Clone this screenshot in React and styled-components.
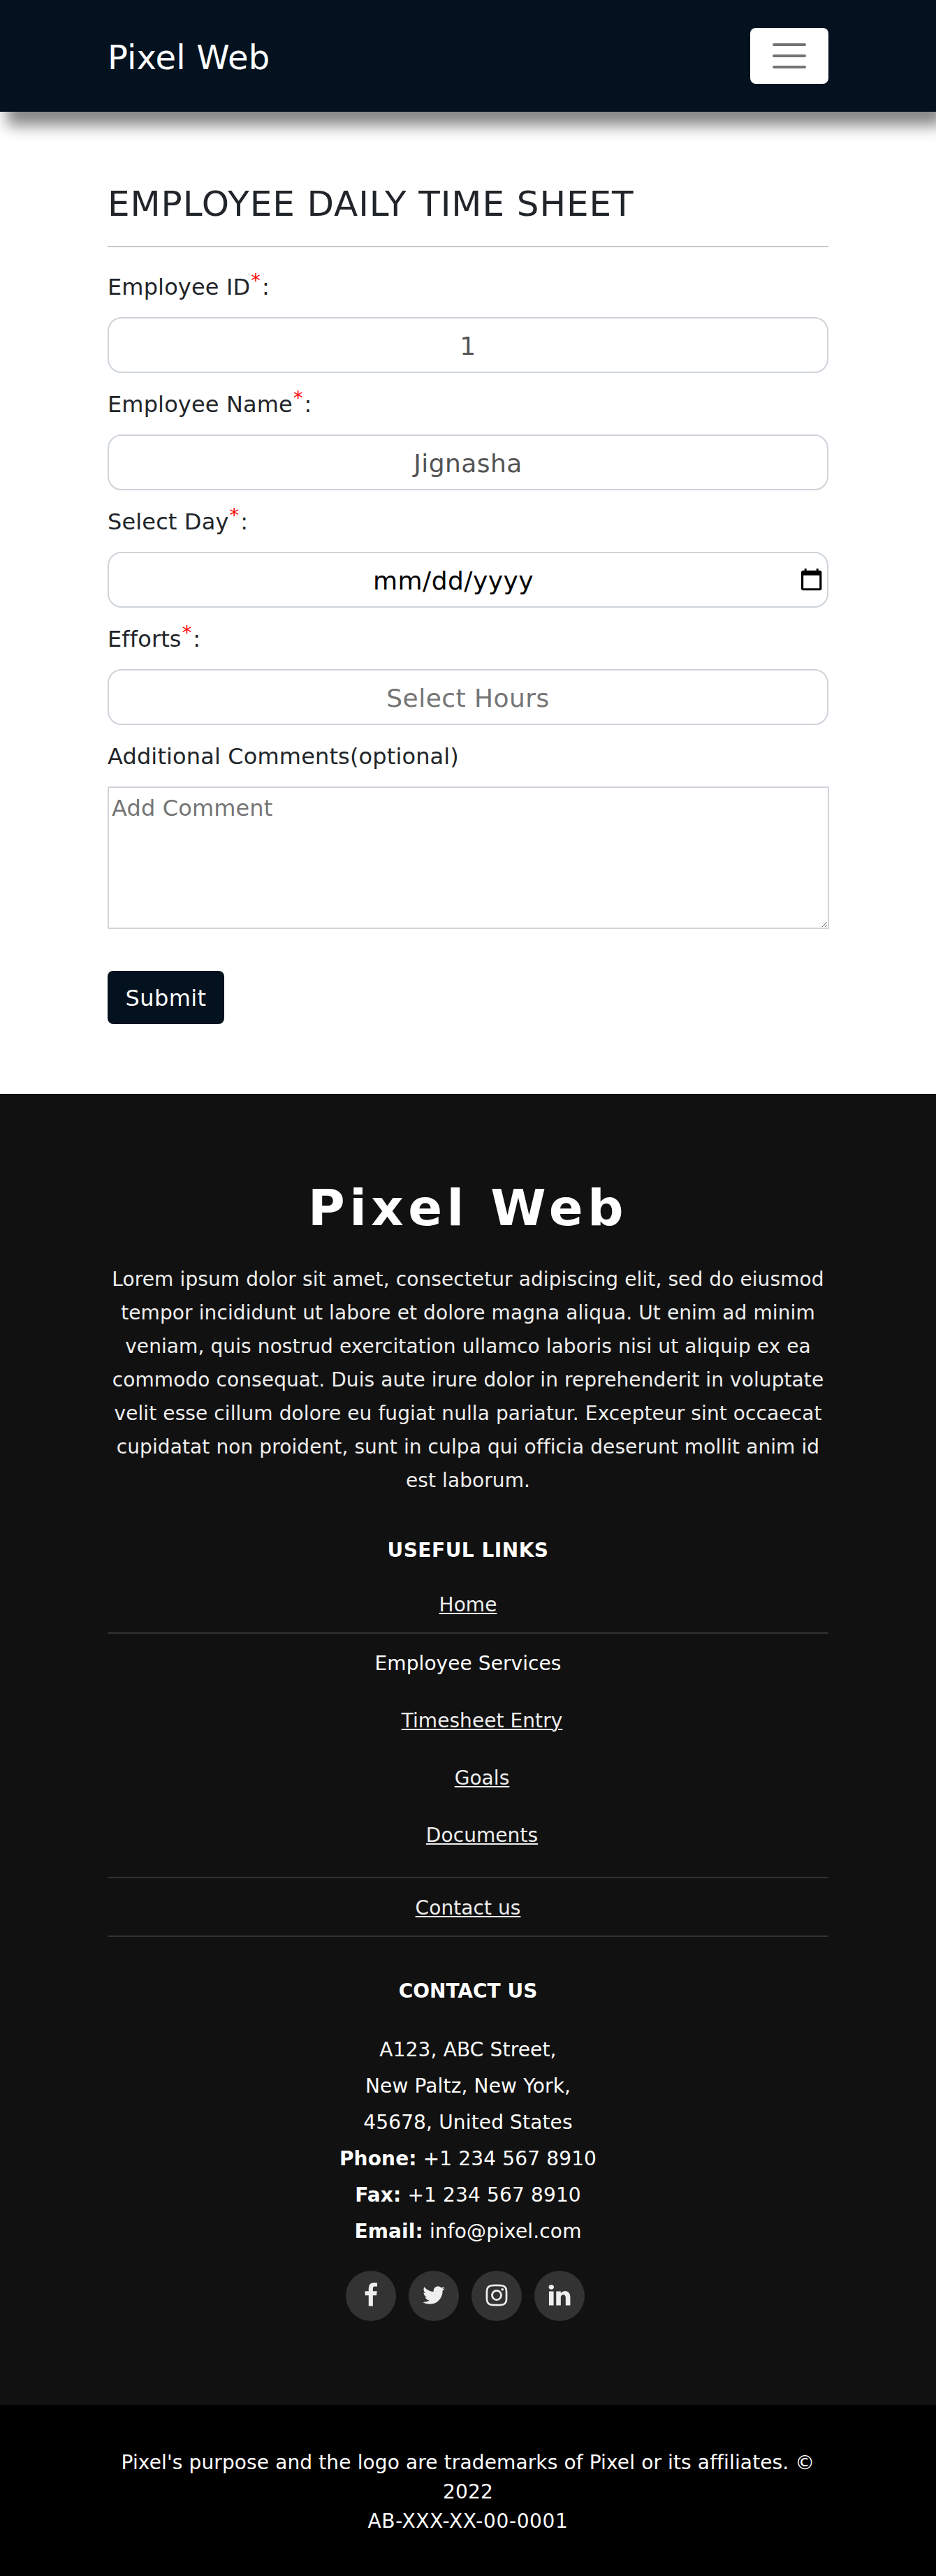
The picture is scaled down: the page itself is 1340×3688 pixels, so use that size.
import React from 'react';
import styled, { createGlobalStyle } from 'styled-components';

const GlobalStyle = createGlobalStyle`
  *, *::before, *::after { box-sizing: border-box; }
  body {
    margin: 0;
    background: #fff;
    color: #212529;
    font-family: Verdana, "DejaVu Sans", sans-serif;
    font-size: 32px;
    line-height: 48px;
    overflow-x: hidden;
  }
  input, textarea, button { font-family: inherit; margin: 0; }
`;

const Header = styled.header`
  position: relative;
  display: flex;
  align-items: center;
  justify-content: space-between;
  height: 160px;
  padding: 0 154px;
  background: #04121f;
  box-shadow: 10px 20px 20px #888;
`;

const Brand = styled.a`
  padding-top: 4px;
  color: #fff;
  font-size: 48px;
  line-height: 72px;
  letter-spacing: 0.15px;
`;

const Toggler = styled.button`
  display: flex;
  flex-direction: column;
  align-items: center;
  justify-content: center;
  gap: 12px;
  width: 112px;
  height: 80px;
  padding: 0;
  border: 0;
  border-radius: 8px;
  background: #fff;
`;

const TogglerBar = styled.span`
  width: 48px;
  height: 4px;
  border-radius: 2px;
  background: #737373;
`;

const Main = styled.main`
  display: flex;
  flex-direction: column;
  padding: 102px 154px 100px;
`;

const Title = styled.h1`
  margin: 0;
  font-size: 50px;
  font-weight: 400;
  line-height: 60px;
  letter-spacing: 0.92px;
`;

const Divider = styled.hr`
  width: 100%;
  height: 2px;
  margin: 30px 0 33px;
  border: 0;
  background: #c8c9ca;
`;

const Form = styled.form`
  display: flex;
  flex-direction: column;
`;

const Field = styled.div`
  display: flex;
  flex-direction: column;
  margin-bottom: ${(p) => (p.$last ? 60 : 21)}px;
`;

const Label = styled.label`
  height: 48px;
  margin-bottom: 19px;
  line-height: 48px;
  letter-spacing: 0.14px;
`;

const Required = styled.sup`
  padding: 0 2px 0 1px;
  color: #f00;
  font-size: 27px;
  line-height: 0;
  vertical-align: 11px;
`;

const InputBox = styled.div`
  display: flex;
  align-items: center;
  height: 80px;
  padding-right: ${(p) => (p.$icon ? 7 : 0)}px;
  border: 2px solid #ced4da;
  border-radius: 20px;
  background: #fff;
`;

const Input = styled.input`
  flex: 1;
  min-width: 0;
  height: 76px;
  padding: 3px 0 0;
  border: 0;
  outline: 0;
  background: transparent;
  color: #545454;
  font-size: 36px;
  letter-spacing: 0.45px;
  text-align: center;

  &::placeholder {
    color: ${(p) => (p.$dark ? '#000' : '#757575')};
    opacity: 1;
  }
`;

const CalendarIcon = styled.svg`
  flex: none;
  width: 30px;
  height: 32px;
  margin-left: 5px;
`;

const Comment = styled.textarea`
  display: block;
  width: 1033px;
  height: 204px;
  padding: 5px 4px;
  border: 2px solid #ced4da;
  outline: 0;
  color: #212529;
  font-size: 32px;
  line-height: 48px;
  letter-spacing: 0.14px;
  resize: both;

  &::placeholder { color: #757575; opacity: 1; }
`;

const Submit = styled.button`
  align-self: flex-start;
  width: 167px;
  height: 76px;
  padding: 2px 0 0;
  border: 0;
  border-radius: 8px;
  background: #04121f;
  color: #fff;
  font-size: 32px;
  letter-spacing: 0.4px;
`;

const Footer = styled.footer`
  display: flex;
  flex-direction: column;
  align-items: stretch;
  padding: 123px 154px 120px;
  background: #111;
  color: #fff;
  font-size: 28px;
  line-height: 42px;
  text-align: center;
`;

const FooterBrand = styled.h2`
  margin: 0 0 39px;
  font-size: 72px;
  font-weight: 700;
  line-height: 80px;
  letter-spacing: 6.5px;
`;

const About = styled.p`
  margin: 0 0 55px;
  color: #eee;
  line-height: 48px;
  letter-spacing: 0.1px;
`;

const FooterHeading = styled.h4`
  margin: 0 0 ${(p) => p.$gap}px;
  font-size: 28px;
  font-weight: 700;
  line-height: 42px;
  letter-spacing: ${(p) => p.$tracking}px;
`;

const LinkList = styled.ul`
  margin: 0 0 57px;
  padding: 0;
  list-style: none;
`;

const LinkItem = styled.li`
  padding: ${(p) => (p.$first ? 0 : 22)}px 0 ${(p) => (p.$group ? 38 : 18)}px;
  border-bottom: 2px solid #333;
  letter-spacing: 0.07px;
`;

const SubList = styled.ul`
  display: flex;
  flex-direction: column;
  gap: 40px;
  margin: 40px 0 0;
  padding: 0 0 0 40px;
  list-style: none;
`;

const SubItem = styled.li`
  line-height: 42px;
`;

const Link = styled.a`
  color: #eee;
  text-decoration: underline;
  text-decoration-thickness: 2px;
  text-underline-offset: 2px;
`;

const Address = styled.p`
  margin: 0 0 30px;
  line-height: 52px;
  letter-spacing: 0.15px;
`;

const Social = styled.div`
  display: flex;
  justify-content: center;
  gap: 18px;
  padding-right: 8px;
`;

const SocialLink = styled.a`
  display: flex;
  align-items: center;
  justify-content: center;
  width: 72px;
  height: 72px;
  padding-bottom: 2px;
  border-radius: 50%;
  background: #333;
  color: #eee;
`;

const SocialIcon = styled.svg`
  width: 36px;
  height: 36px;
  fill: currentColor;
`;

const Legal = styled.div`
  padding: 62px 154px 57px;
  background: #000;
  color: #fff;
  font-size: 28px;
  line-height: 42px;
  letter-spacing: 0.13px;
  text-align: center;
`;

const LegalCode = styled.div`
  letter-spacing: 0.65px;
`;

const SOCIAL = [
  {
    name: 'Facebook',
    d: 'M1343 12v264h-157q-86 0-116 36t-30 108v189h293l-39 296h-254v759h-306v-759h-255v-296h255v-218q0-186 104-288.5t277-102.5q147 0 228 12z',
  },
  {
    name: 'Twitter',
    d: 'M1684 408q-67 98-162 167 1 14 1 42 0 130-38 259.5t-115.5 248.5-184.5 210.5-258 146-323 54.5q-271 0-496-145 35 4 78 4 225 0 401-138-105-2-188-64.5t-114-159.5q33 5 61 5 43 0 85-11-112-23-185.5-111.5t-73.5-205.5v-4q68 38 146 41-66-44-105-115t-39-154q0-88 44-163 121 149 294.5 238.5t371.5 99.5q-8-38-8-74 0-134 94.5-228.5t228.5-94.5q140 0 236 102 109-21 205-78-37 115-142 178 93-10 186-50z',
  },
  {
    name: 'Instagram',
    d: 'M1152 896q0-106-75-181t-181-75-181 75-75 181 75 181 181 75 181-75 75-181zm138 0q0 164-115 279t-279 115-279-115-115-279 115-279 279-115 279 115 115 279zm108-410q0 38-27 65t-65 27-65-27-27-65 27-65 65-27 65 27 27 65zm-502-220q-7 0-76.5-.5t-105.5 0-96.5 3-103 10-71.5 18.5q-50 20-88 58t-58 88q-11 29-18.5 71.5t-10 103-3 96.5 0 105.5.5 76.5-.5 76.5 0 105.5 3 96.5 10 103 18.5 71.5q20 50 58 88t88 58q29 11 71.5 18.5t103 10 96.5 3 105.5 0 76.5-.5 76.5.5 105.5 0 96.5-3 103-10 71.5-18.5q50-20 88-58t58-88q11-29 18.5-71.5t10-103 3-96.5 0-105.5-.5-76.5.5-76.5 0-105.5-3-96.5-10-103-18.5-71.5q-20-50-58-88t-88-58q-29-11-71.5-18.5t-103-10-96.5-3-105.5 0-76.5.5zm768 630q0 229-5 317-10 208-124 322t-322 124q-88 5-317 5t-317-5q-208-10-322-124t-124-322q-5-88-5-317t5-317q10-208 124-322t322-124q88-5 317-5t317 5q208 10 322 124t124 322q5 88 5 317z',
  },
  {
    name: 'LinkedIn',
    d: 'M477 625v991h-330v-991h330zm21-306q1 73-50.5 122t-135.5 49h-2q-82 0-132-49t-50-122q0-74 51.5-122.5t134.5-48.5 133 48.5 51 122.5zm1166 729v568h-329v-530q0-105-40.5-164.5t-126.5-59.5q-63 0-105.5 34.5t-63.5 85.5q-11 30-11 81v553h-329q2-399 2-647t-1-296l-1-48h329v144h-2q20-32 41-56t56.5-52 87-43.5 114.5-15.5q171 0 275 113.5t104 332.5z',
  },
];

function RequiredLabel({ htmlFor, children }) {
  return (
    <Label htmlFor={htmlFor}>
      {children}
      <Required>*</Required>:
    </Label>
  );
}

export default function App() {
  return (
    <>
      <GlobalStyle />
      <Header>
        <Brand>Pixel Web</Brand>
        <Toggler aria-label="Toggle navigation">
          <TogglerBar />
          <TogglerBar />
          <TogglerBar />
        </Toggler>
      </Header>

      <Main>
        <Title>EMPLOYEE DAILY TIME SHEET</Title>
        <Divider />
        <Form onSubmit={(e) => e.preventDefault()}>
          <Field>
            <RequiredLabel htmlFor="employee-id">Employee ID</RequiredLabel>
            <InputBox>
              <Input id="employee-id" value="1" readOnly />
            </InputBox>
          </Field>
          <Field>
            <RequiredLabel htmlFor="employee-name">Employee Name</RequiredLabel>
            <InputBox>
              <Input id="employee-name" value="Jignasha" readOnly />
            </InputBox>
          </Field>
          <Field>
            <RequiredLabel htmlFor="day">Select Day</RequiredLabel>
            <InputBox $icon>
              <Input id="day" placeholder="mm/dd/yyyy" $dark />
              <CalendarIcon viewBox="0 0 30 32" aria-hidden="true">
                <path
                  fillRule="evenodd"
                  d="M4.7 0h3v2.7h14V0h3v2.7h2A2.8 2.8 0 0 1 29.4 5.5v23A2.8 2.8 0 0 1 26.6 31.3H2.8A2.8 2.8 0 0 1 0 28.5v-23A2.8 2.8 0 0 1 2.8 2.7h1.9zM3.2 9.7v18.5h23V9.7z"
                />
              </CalendarIcon>
            </InputBox>
          </Field>
          <Field>
            <RequiredLabel htmlFor="efforts">Efforts</RequiredLabel>
            <InputBox>
              <Input id="efforts" placeholder="Select Hours" />
            </InputBox>
          </Field>
          <Field $last>
            <Label htmlFor="comments">Additional Comments(optional)</Label>
            <Comment id="comments" placeholder="Add Comment" />
          </Field>
          <Submit type="submit">Submit</Submit>
        </Form>
      </Main>

      <Footer>
        <FooterBrand>Pixel Web</FooterBrand>
        <About>
          Lorem ipsum dolor sit amet, consectetur adipiscing elit, sed do eiusmod tempor incididunt ut
          labore et dolore magna aliqua. Ut enim ad minim veniam, quis nostrud exercitation ullamco
          laboris nisi ut aliquip ex ea commodo consequat. Duis aute irure dolor in reprehenderit in
          voluptate velit esse cillum dolore eu fugiat nulla pariatur. Excepteur sint occaecat cupidatat
          non proident, sunt in culpa qui officia deserunt mollit anim id est laborum.
        </About>

        <FooterHeading $gap={36} $tracking={0.5}>USEFUL LINKS</FooterHeading>
        <LinkList>
          <LinkItem $first>
            <Link>Home</Link>
          </LinkItem>
          <LinkItem $group>
            Employee Services
            <SubList>
              <SubItem><Link>Timesheet Entry</Link></SubItem>
              <SubItem><Link>Goals</Link></SubItem>
              <SubItem><Link>Documents</Link></SubItem>
            </SubList>
          </LinkItem>
          <LinkItem>
            <Link>Contact us</Link>
          </LinkItem>
        </LinkList>

        <FooterHeading $gap={37} $tracking={0}>CONTACT US</FooterHeading>
        <Address>
          A123, ABC Street,
          <br />
          New Paltz, New York,
          <br />
          45678, United States
          <br />
          <strong>Phone:</strong> +1 234 567 8910
          <br />
          <strong>Fax:</strong> +1 234 567 8910
          <br />
          <strong>Email:</strong> info@pixel.com
        </Address>
        <Social>
          {SOCIAL.map((item) => (
            <SocialLink key={item.name} aria-label={item.name}>
              <SocialIcon viewBox="0 0 1792 1792" aria-hidden="true">
                <path d={item.d} />
              </SocialIcon>
            </SocialLink>
          ))}
        </Social>
      </Footer>

      <Legal>
        Pixel's purpose and the logo are trademarks of Pixel or its affiliates. © 2022
        <LegalCode>AB-XXX-XX-00-0001</LegalCode>
      </Legal>
    </>
  );
}
